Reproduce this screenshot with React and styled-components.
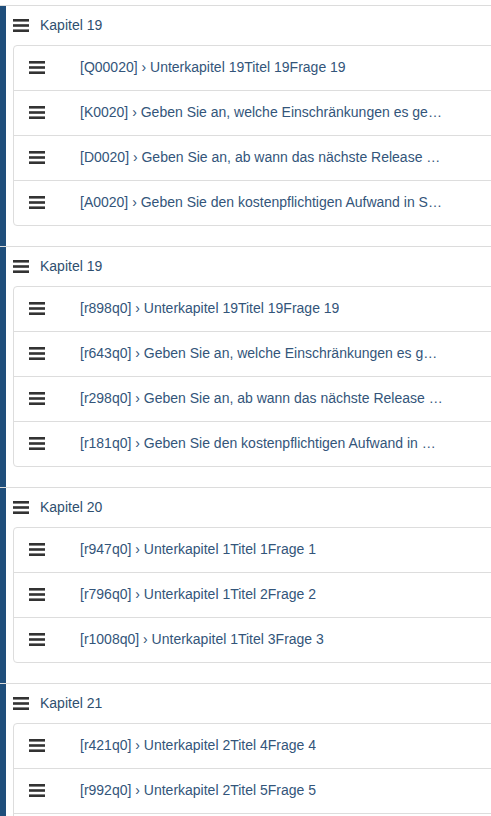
import styled, { createGlobalStyle } from "styled-components";

const GlobalStyle = createGlobalStyle`
  html, body {
    margin: 0;
    padding: 0;
    background: #fff;
    overflow: hidden;
  }
  body {
    font-family: "Liberation Sans", Arial, sans-serif;
  }
`

const Page = styled.div`
  padding-top: 5px;
  width: 491px;
  height: 816px;
  overflow: hidden;
`

const Section = styled.section`
  border-top: 1px solid #dcdcdc;
`

const SectionBody = styled.div`
  border-left: 6px solid #1f4e7b;
  padding: 0 0 20px 7px;
`

const ChapterHeader = styled.div`
  display: flex;
  align-items: center;
  height: 39px;
  padding-bottom: 1px;
  box-sizing: border-box;
  gap: 11px;
  font-size: 14px;
  color: #2f4f6f;
`

const List = styled.ul`
  list-style: none;
  margin: 0;
  padding: 0;
  width: 500px;
  border: 1px solid #dddddd;
  border-radius: 4px;
`

const Item = styled.li`
  display: flex;
  align-items: center;
  height: 44px;
  box-sizing: content-box;
  padding: 0 0 0 15px;
  border-top: ${(p) => (p.first ? "none" : "1px solid #dddddd")};

  & > svg {
    margin-top: -2px;
  }
`

const ItemText = styled.span`
  margin-left: 35px;
  margin-top: -2px;
  max-width: 364px;
  font-size: 14px;
  color: #33557a;
  white-space: nowrap;
  overflow: hidden;
  text-overflow: ellipsis;
`

function Bars() {
  return (
    <svg width="16" height="13" viewBox="0 0 16 13">
      <rect x="0" y="0" width="16" height="2.6" fill="#333" />
      <rect x="0" y="5.2" width="16" height="2.6" fill="#333" />
      <rect x="0" y="10.4" width="16" height="2.6" fill="#333" />
    </svg>
  )
}

const chapters = [
  {
    title: "Kapitel 19",
    items: [
      "[Q00020] › Unterkapitel 19Titel 19Frage 19",
      "[K0020] › Geben Sie an, welche Einschränkungen es gegenüber der Standardversion gibt",
      "[D0020] › Geben Sie an, ab wann das nächste Release verfügbar ist",
      "[A0020] › Geben Sie den kostenpflichtigen Aufwand in Stunden an",
    ],
  },
  {
    title: "Kapitel 19",
    items: [
      "[r898q0] › Unterkapitel 19Titel 19Frage 19",
      "[r643q0] › Geben Sie an, welche Einschränkungen es gegenüber der Standardversion gibt",
      "[r298q0] › Geben Sie an, ab wann das nächste Release verfügbar ist",
      "[r181q0] › Geben Sie den kostenpflichtigen Aufwand in Stunden an",
    ],
  },
  {
    title: "Kapitel 20",
    items: [
      "[r947q0] › Unterkapitel 1Titel 1Frage 1",
      "[r796q0] › Unterkapitel 1Titel 2Frage 2",
      "[r1008q0] › Unterkapitel 1Titel 3Frage 3",
    ],
  },
  {
    title: "Kapitel 21",
    items: [
      "[r421q0] › Unterkapitel 2Titel 4Frage 4",
      "[r992q0] › Unterkapitel 2Titel 5Frage 5",
      "[r533q0] › Unterkapitel 2Titel 6Frage 6",
    ],
  },
]

export default function App() {
  return (
    <Page>
      <GlobalStyle />
      {chapters.map((ch, i) => (
        <Section key={i}>
          <SectionBody>
            <ChapterHeader>
              <Bars />
              <span>{ch.title}</span>
            </ChapterHeader>
            <List>
              {ch.items.map((it, j) => (
                <Item key={j} first={j === 0}>
                  <Bars />
                  <ItemText>{it}</ItemText>
                </Item>
              ))}
            </List>
          </SectionBody>
        </Section>
      ))}
    </Page>
  )
}
